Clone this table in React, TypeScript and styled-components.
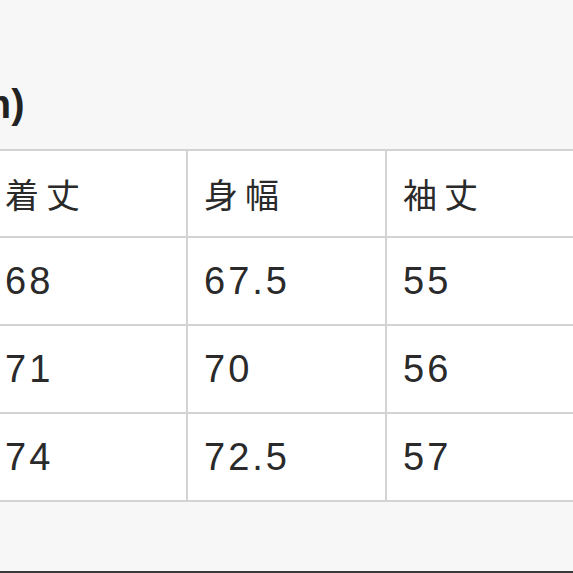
import styled, {createGlobalStyle} from 'styled-components';

const GlobalStyle = createGlobalStyle`
	html, body {
		margin: 0;
		padding: 0;
		background: #f7f7f7;
	}
	body {
		font-family: 'Liberation Sans', 'Noto Sans CJK JP', sans-serif;
		color: #2b2b2b;
	}
`;

const Page = styled.div`
	width: 573px;
	height: 573px;
	box-sizing: border-box;
	overflow: hidden;
	background: #f7f7f7;
	border-bottom: 2px solid #3a3a3a;
	padding-top: 81px;
`;

const Heading = styled.h2`
	margin: 0 0 0 -60px;
	font-size: 40px;
	line-height: 46px;
	font-weight: 700;
	color: #222;
	white-space: nowrap;
`;

const SizeTable = styled.table`
	margin: 22px 0 0 -13px;
	border-collapse: collapse;
	table-layout: fixed;
	width: 597px;
	background: #fff;
`;

const Cell = styled.td<{$head?: boolean}>`
	width: 199px;
	height: ${({$head}) => ($head ? '87px' : '88px')};
	box-sizing: border-box;
	padding: 0 0 0 16px;
	border: 2px solid #d3d3d3;
	vertical-align: middle;
	white-space: nowrap;
	font-size: ${({$head}) => ($head ? '34px' : '38px')};
	letter-spacing: ${({$head}) => ($head ? '7px' : '3px')};
	font-weight: 400;
	color: #2a2a2a;
`;

const header = ['着丈', '身幅', '袖丈'];
const rows = [
	['68', '67.5', '55'],
	['71', '70', '56'],
	['74', '72.5', '57'],
];

function App() {
	return (
		<>
			<GlobalStyle />
			<Page>
				<Heading>(cm)</Heading>
				<SizeTable>
					<tbody>
						<tr>
							{header.map((h) => (
								<Cell $head key={h}>
									{h}
								</Cell>
							))}
						</tr>
						{rows.map((r) => (
							<tr key={r[0]}>
								{r.map((v) => (
									<Cell key={v}>{v}</Cell>
								))}
							</tr>
						))}
					</tbody>
				</SizeTable>
			</Page>
		</>
	);
}
export default App;
